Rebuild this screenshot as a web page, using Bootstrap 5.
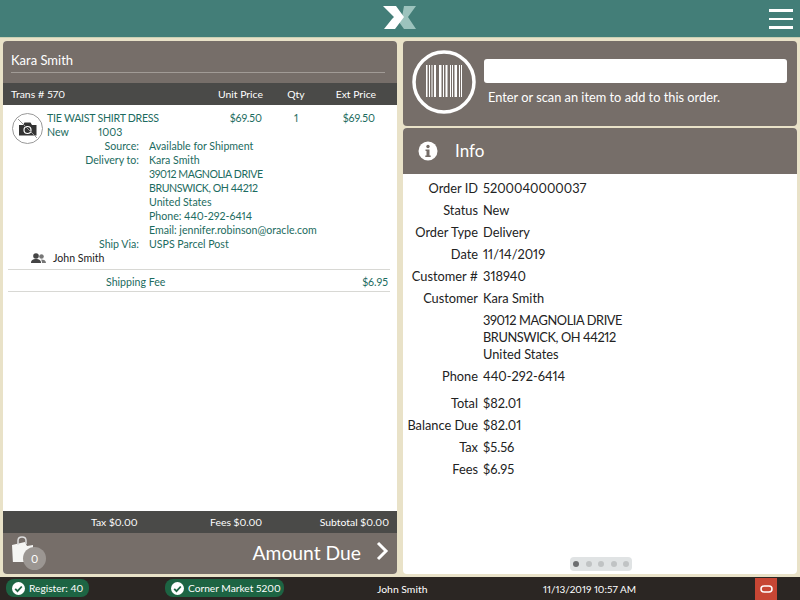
<!DOCTYPE html>
<html lang="en">
<head>
<meta charset="utf-8">
<title>Order</title>
<link rel="stylesheet" href="https://cdn.jsdelivr.net/npm/bootstrap@5.3.0/dist/css/bootstrap.min.css">
<style>
html,body{height:600px;overflow:hidden}
body{background:#e9e2c8;font-family:Lato,"Liberation Sans",sans-serif;font-size:10.6px;color:#1c6b60;width:800px;font-variant-numeric:proportional-nums}
.app-shell{height:600px}
.top-strip{height:38px;background:#437e78;border-bottom:1px solid #c9d0b4;flex:none}
.logo-box{width:34px;height:24px;margin-top:5px}
.burger{right:7px;top:9px;width:24px}
.burger i{display:block;height:2.5px;background:#fff;margin-bottom:6px}
.work{flex:1;padding:3px;gap:6px;min-height:0}
.pane{width:394px;border-radius:4px;overflow:hidden;background:#fff}
.pane-clear{width:394px;gap:2px}
.cust-head{height:42px;background:#766e69;color:#fff;font-size:13px;padding:11px 12px 0 8px}
.cust-name{border-bottom:1px solid #a19b96;height:21px;line-height:16px}
.dark-bar{height:22px;background:#4a4a48;color:#fff;line-height:22px;font-size:10.4px;flex:none}
.cols{display:grid;grid-template-columns:215px 44px 68px 46px;white-space:nowrap}
.cols .num{text-align:right}
.cols .mid{text-align:center}
.trans{padding-left:8px}
.item-area{flex:1;padding:6px 5px 0;line-height:14px;position:relative}
.item-top{height:14px;grid-template-columns:210px 44px 68px 45px}
.item-name{padding-left:39px}
.caps-a{letter-spacing:-.25px}
.caps-b{letter-spacing:-.4px}
.photo{left:9px;top:8px;width:31px;height:31px}
.sub-grid{display:grid;grid-template-columns:131px 1fr;column-gap:10px}
.sub-grid .lab{text-align:right}
.assoc{height:14px;color:#222;padding-left:23px;display:flex;align-items:center;gap:7px}
.fee-row{border-top:1px solid #d8d8d4;border-bottom:1px solid #d8d8d4;margin-top:4px;width:382px;height:23px;line-height:24px;display:flex}
.fee-name{padding-left:98px;white-space:nowrap}
.fee-amt{margin-left:auto;padding-right:2px}
.due-bar{height:41px;background:#766e69;color:#fff;flex:none;position:relative}
.due-text{font-size:19.3px;right:36px;top:8px;line-height:24px}
.bag{left:7px;top:3px;width:24px;height:26px}
.bag-count{left:20px;top:14px;width:23px;height:23px;border-radius:50%;background:#9b9692;color:#fff;font-size:11px;text-align:center;line-height:24px}
.due-arrow{right:8px;top:8px;width:13px;height:20px}
.scan-box{height:85px;background:#766e69;border-radius:4px;flex:none;position:relative;color:#fff}
.scan-ring{left:9px;top:9px;width:64px;height:64px}
.scan-input{left:81px;top:18px;width:303px;height:24px;background:#fff;border-radius:3px}
.scan-hint{left:85px;top:47px;font-size:12.8px;line-height:18px}
.info-box{flex:1;background:#fff;border-radius:4px;overflow:hidden;position:relative;color:#222;min-height:0}
.info-head{height:46px;background:#766e69;color:#fff;font-size:17px;display:flex;align-items:center;flex:none}
.info-head svg{margin-left:15px;margin-right:17px}
.info-list{display:grid;grid-template-columns:75px 1fr;column-gap:5px;font-size:12.8px;line-height:22px;padding-top:3px}
.info-list .lab{text-align:right;white-space:nowrap}
.info-list .addr{line-height:17px;padding-top:3px;padding-bottom:2px}
.info-list .gap-top{margin-top:5px}
.dots{left:167px;bottom:3px;width:62px;height:14px;background:#e0e3e4;border-radius:4px;display:flex;align-items:center;justify-content:center;gap:6.5px}
.dots i{width:6px;height:6px;border-radius:50%;background:#c0c3c4}
.dots i.on{background:#6c6e70}
.foot{height:23px;background:#2b2623;color:#fff;flex:none;position:relative;line-height:24px;font-size:10.2px}
.pill{top:2px;height:18px;background:#1d6443;border-radius:8px;display:flex;align-items:center;gap:4px;padding:0 6px;white-space:nowrap}
.pill svg{flex:none}
.pill-a{left:6px;width:83px}
.pill-b{left:165px;width:119px}
.foot-user{left:377px;font-size:10.4px}
.foot-date{left:543px;font-size:10px}
.oracle{left:755px;top:1px;width:22px;height:22px;background:#c74634;display:flex;align-items:center;justify-content:center}
</style>
</head>
<body>
<div class="app-shell d-flex flex-column">
  <div class="top-strip position-relative d-flex justify-content-center">
    <svg class="logo-box" viewBox="0 0 34 24" aria-label="Logo">
      <polygon points="21,1 33,1 25,12 33,24 21,24 16,17 19,12" fill="#9cc3bd"/>
      <polygon points="0,1 13,1 21,12 12,24 1,24 9,14 11,12" fill="#fff"/>
    </svg>
    <div class="burger position-absolute"><i></i><i></i><i></i></div>
  </div>
  <div class="work d-flex">
    <div class="pane d-flex flex-column">
      <div class="cust-head flex-none"><div class="cust-name">Kara Smith</div></div>
      <div class="dark-bar cols">
        <div class="trans">Trans # 570</div>
        <div class="num">Unit Price</div>
        <div class="mid">Qty</div>
        <div class="num">Ext Price</div>
      </div>
      <div class="item-area">
        <svg class="photo position-absolute" viewBox="0 0 31 31" aria-label="No photo">
          <circle cx="15.5" cy="15.5" r="15" fill="#fff" stroke="#999" stroke-width="1"/>
          <path d="M7 12h4l1.5-2.500h6L20 12h4.500v10.500H7z" fill="#333"/>
          <circle cx="15.500" cy="17" r="3.500" fill="#333" stroke="#fff" stroke-width="1.200"/>
          <path d="M6 6L25 25" stroke="#999" stroke-width="1"/>
        </svg>
        <div class="item-top cols">
          <div class="item-name caps-a">TIE WAIST SHIRT DRESS</div>
          <div class="num">$69.50</div>
          <div class="mid">1</div>
          <div class="num">$69.50</div>
        </div>
        <div class="d-flex" style="padding-left:39px"><span style="width:51px">New</span><span>1003</span></div>
        <div class="sub-grid">
          <div class="lab">Source:</div><div>Available for Shipment</div>
          <div class="lab">Delivery to:</div><div>Kara Smith</div>
          <div></div><div class="caps-b">39012 MAGNOLIA DRIVE</div>
          <div></div><div class="caps-b">BRUNSWICK, OH 44212</div>
          <div></div><div>United States</div>
          <div></div><div>Phone: 440-292-6414</div>
          <div></div><div>Email: jennifer.robinson@oracle.com</div>
          <div class="lab">Ship Via:</div><div>USPS Parcel Post</div>
        </div>
        <div class="assoc">
          <svg width="15" height="11" viewBox="0 0 15 11" aria-hidden="true"><circle cx="5" cy="3" r="2.800" fill="#444"/><path d="M0 10c0-3 2-4 5-4s5 1 5 4z" fill="#444"/><circle cx="10.500" cy="3.500" r="2.300" fill="#777"/><path d="M10 6.500c3 0 5 1 5 3.500h-4c0-1.500-.5-2.500-1-3.500z" fill="#777"/></svg>
          <span>John Smith</span>
        </div>
        <div class="fee-row"><div class="fee-name">Shipping Fee</div><div class="fee-amt">$6.95</div></div>
      </div>
      <div class="dark-bar position-relative">
        <span class="position-absolute" style="left:88px">Tax $0.00</span>
        <span class="position-absolute" style="left:207px">Fees $0.00</span>
        <span class="position-absolute" style="right:8px">Subtotal $0.00</span>
      </div>
      <div class="due-bar">
        <svg class="bag position-absolute" viewBox="0 0 24 26" aria-hidden="true"><path d="M2 9l13-3 2 4 6-1v9l-11 10H3z" fill="#f5f5f3"/><path d="M8 9V4.500C8 2 10 1 12 1s4 1 4 3.500V8" fill="none" stroke="#ddd" stroke-width="1.500"/></svg>
        <div class="bag-count position-absolute">0</div>
        <div class="due-text position-absolute">Amount Due</div>
        <svg class="due-arrow position-absolute" viewBox="0 0 13 20" aria-hidden="true"><path d="M2 2l8 8-8 8" fill="none" stroke="#fff" stroke-width="3"/></svg>
      </div>
    </div>
    <div class="pane-clear d-flex flex-column">
      <div class="scan-box">
        <svg class="scan-ring position-absolute" viewBox="0 0 64 64" aria-label="Barcode">
          <circle cx="32" cy="32" r="30" fill="none" stroke="#fff" stroke-width="3.500"/>
          <path d="M14 15h1.500v32H14zM17 15h1v32h-1zM19.500 15h1v32h-1zM22 15h2v32h-2zM27 15h2.500v32H27zM31 15h1v32h-1zM33.500 15h2v32h-2zM38 15h1v32h-1zM40 15h1v32h-1zM42.500 15h2.500v32h-2.500zM47 15h1v32h-1zM49 15h1v32h-1z" fill="#fff"/>
        </svg>
        <div class="scan-input position-absolute"></div>
        <div class="scan-hint position-absolute">Enter or scan an item to add to this order.</div>
      </div>
      <div class="info-box d-flex flex-column">
        <div class="info-head">
          <svg width="20" height="20" viewBox="0 0 20 20" aria-hidden="true"><circle cx="10" cy="10" r="9.500" fill="#fff"/><circle cx="10" cy="5.500" r="1.700" fill="#766e69"/><path d="M7.500 8.500h4v6h1.200v1.500H7.300v-1.500h1.200v-4.500h-1z" fill="#766e69"/></svg>
          <span>Info</span>
        </div>
        <div class="info-list">
          <div class="lab">Order ID</div><div>5200040000037</div>
          <div class="lab">Status</div><div>New</div>
          <div class="lab">Order Type</div><div>Delivery</div>
          <div class="lab">Date</div><div>11/14/2019</div>
          <div class="lab">Customer #</div><div>318940</div>
          <div class="lab">Customer</div><div>Kara Smith</div>
          <div></div><div class="addr"><span class="caps-b">39012 MAGNOLIA DRIVE</span><br><span class="caps-b">BRUNSWICK, OH 44212</span><br>United States</div>
          <div class="lab">Phone</div><div>440-292-6414</div>
          <div class="lab gap-top">Total</div><div class="gap-top">$82.01</div>
          <div class="lab">Balance Due</div><div>$82.01</div>
          <div class="lab">Tax</div><div>$5.56</div>
          <div class="lab">Fees</div><div>$6.95</div>
        </div>
        <div class="dots position-absolute"><i class="on"></i><i></i><i></i><i></i><i></i></div>
      </div>
    </div>
  </div>
  <div class="foot">
    <div class="pill pill-a position-absolute">
      <svg width="13" height="13" viewBox="0 0 13 13" aria-hidden="true"><circle cx="6.500" cy="6.500" r="6.500" fill="#fff"/><path d="M3.200 6.800l2.300 2.300 4.300-4.600" fill="none" stroke="#1d6443" stroke-width="1.800"/></svg>
      <span>Register: 40</span>
    </div>
    <div class="pill pill-b position-absolute">
      <svg width="13" height="13" viewBox="0 0 13 13" aria-hidden="true"><circle cx="6.500" cy="6.500" r="6.500" fill="#fff"/><path d="M3.200 6.800l2.300 2.300 4.300-4.600" fill="none" stroke="#1d6443" stroke-width="1.800"/></svg>
      <span>Corner Market 5200</span>
    </div>
    <div class="foot-user position-absolute">John Smith</div>
    <div class="foot-date position-absolute">11/13/2019 10:57 AM</div>
    <div class="oracle position-absolute"><svg width="13" height="8" viewBox="0 0 13 8" aria-label="Oracle"><rect x="1" y="1" width="11" height="6" rx="3" fill="none" stroke="#fff" stroke-width="1.500"/></svg></div>
  </div>
</div>
</body>
</html>
